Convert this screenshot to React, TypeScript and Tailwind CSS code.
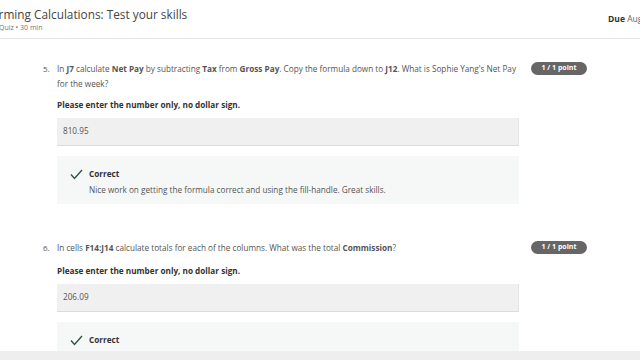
const questions = [
  {
    n: '5.',
    text: (
      <>
        In <b>J7</b> calculate <b>Net Pay</b> by subtracting <b>Tax</b> from <b>Gross Pay</b>. Copy the formula down to <b>J12</b>. What is Sophie Yang's Net Pay for the week?
      </>
    ),
    gap: 'mt-[6px]',
    answer: '810.95',
    feedback: 'Nice work on getting the formula correct and using the fill-handle. Great skills.',
  },
  {
    n: '6.',
    text: (
      <>
        In cells <b>F14:J14</b> calculate totals for each of the columns. What was the total <b>Commission</b>?
      </>
    ),
    gap: 'mt-[8px]',
    answer: '206.09',
    feedback: 'Well done.',
  },
];

function Check() {
  return (
    <svg width="13" height="11" viewBox="0 0 13 11" className="shrink-0 mt-[3px]">
      <polyline points="1,5.5 4.5,9.5 12,1" fill="none" stroke="#2e5540" strokeWidth="1.4" />
    </svg>
  );
}

export default function App() {
  return (
    <div
      className="relative w-[640px] h-[360px] overflow-hidden bg-white text-[#3a3a3a]"
      style={{ fontFamily: '"Open Sans", "Noto Sans", sans-serif' }}
    >
      <header className="h-[39px] border-b border-[#e6e6e6] flex justify-between overflow-hidden">
        <div className="pt-[4px]">
          <div className="-ml-[31px] text-[11.8px] leading-[20px] text-[#444] whitespace-nowrap">
            Performing Calculations: Test your skills
          </div>
          <div className="-ml-[1px] text-[7px] leading-[9px] mt-[-1px] text-[#777] whitespace-nowrap">
            Quiz • 30 min
          </div>
        </div>
        <div className="pt-[13px] w-[32px] text-[8.5px] whitespace-nowrap">
          <b className="text-[#333]">Due</b> <span className="text-[#666]">Aug 28, 11:59 PM</span>
        </div>
      </header>

      <main className="pl-[43px] pt-[22px]">
        {questions.map((q, i) => (
          <div key={q.n} className={i === 0 ? 'flex items-start' : 'flex items-start mt-[36px]'}>
            <span className="w-[14px] text-[8px] leading-[15px] text-[#555]">{q.n}</span>
            <div className="w-[462px] text-[8.2px]">
              <p className="leading-[15px] text-[#555] pr-[2px]">{q.text}</p>
              <p className={`${q.gap} leading-[15px] font-bold text-[#333]`}>Please enter the number only, no dollar sign.</p>
              <div className="mt-[6px] h-[28px] bg-[#f0f0f0] border-b border-[#dcdcdc] border-r border-r-[#e4e4e4] flex items-center pl-[6px] text-[#555]">
                {q.answer}
              </div>
              <div className="mt-[10px] h-[48px] bg-[#f5f8f6] pl-[13px] pt-[10px]">
                <div className="flex items-start gap-[6px]">
                  <Check />
                  <div>
                    <p className="leading-[15px] font-bold text-[#333]">Correct</p>
                    <p className="leading-[15px] text-[#555] mt-[1px]">{q.feedback}</p>
                  </div>
                </div>
              </div>
            </div>
            <span className="ml-[12px] mt-[1px] h-[13px] w-[56px] rounded-full bg-[#666] text-white text-[7px] font-bold flex items-center justify-center">
              1 / 1 point
            </span>
          </div>
        ))}
      </main>

      <div className="absolute left-0 right-0 bottom-0 h-[9px] bg-[#eeeeee]" />
    </div>
  );
}
